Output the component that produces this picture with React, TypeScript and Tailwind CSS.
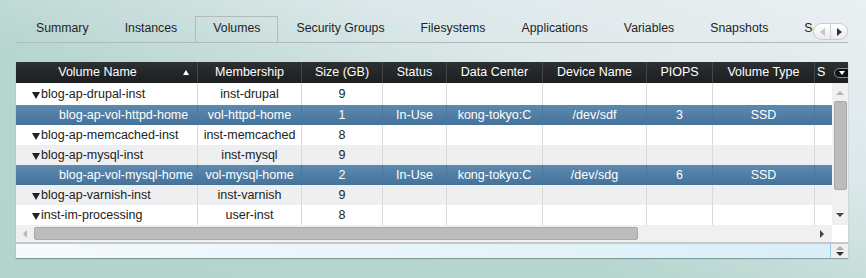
import React from 'react';

type Row = {
  name: string;
  child?: boolean;
  membership: string;
  size: string;
  status?: string;
  dataCenter?: string;
  device?: string;
  piops?: string;
  type?: string;
  tone: 'white' | 'gray' | 'sel';
  tall?: boolean;
};

const tabs = [
  'Summary',
  'Instances',
  'Volumes',
  'Security Groups',
  'Filesystems',
  'Applications',
  'Variables',
  'Snapshots',
  'Services',
];

const colWidths = [
  'w-[182px]',
  'w-[104px]',
  'w-[81px]',
  'w-[64px]',
  'w-[96px]',
  'w-[104px]',
  'w-[66px]',
  'w-[102px]',
  'w-[90px]',
];

const headers = [
  'Volume Name',
  'Membership',
  'Size (GB)',
  'Status',
  'Data Center',
  'Device Name',
  'PIOPS',
  'Volume Type',
  'State',
];

const rows: Row[] = [
  { name: 'blog-ap-drupal-inst', membership: 'inst-drupal', size: '9', tone: 'white', tall: true },
  {
    name: 'blog-ap-vol-httpd-home',
    child: true,
    membership: 'vol-httpd-home',
    size: '1',
    status: 'In-Use',
    dataCenter: 'kong-tokyo:C',
    device: '/dev/sdf',
    piops: '3',
    type: 'SSD',
    tone: 'sel',
  },
  { name: 'blog-ap-memcached-inst', membership: 'inst-memcached', size: '8', tone: 'white' },
  { name: 'blog-ap-mysql-inst', membership: 'inst-mysql', size: '9', tone: 'gray' },
  {
    name: 'blog-ap-vol-mysql-home',
    child: true,
    membership: 'vol-mysql-home',
    size: '2',
    status: 'In-Use',
    dataCenter: 'kong-tokyo:C',
    device: '/dev/sdg',
    piops: '6',
    type: 'SSD',
    tone: 'sel',
  },
  { name: 'blog-ap-varnish-inst', membership: 'inst-varnish', size: '9', tone: 'gray' },
  { name: 'inst-im-processing', membership: 'user-inst', size: '8', tone: 'white' },
];

const toneClass = {
  white: 'bg-white text-[#222]',
  gray: 'bg-[#eeeff1] text-[#222]',
  sel: 'bg-gradient-to-b from-[#5b8ab0] to-[#46729a] text-white',
};

function TabStrip() {
  return (
    <div className="mt-[16px] flex h-[27px] border-b border-[#b4b9bb] text-[12.3px]">
      <div className="ml-[2px] flex h-[26px] w-[795px] overflow-hidden">
        {tabs.map((t) => (
          <div
            key={t}
            className={
              t === 'Volumes'
                ? 'relative z-10 -mb-px flex h-[27px] shrink-0 items-center border-x border-t border-[#b4b9bb] border-b border-b-[#e0e9eb] px-[17px] pb-[2px] text-[#1f1f1f]'
                : 'flex h-[26px] shrink-0 items-center border-x border-transparent px-[17px] pb-[1px] text-[#1f1f1f]'
            }
          >
            {t}
          </div>
        ))}
      </div>
      <div className="mb-[2px] flex h-[17px] w-[35px] self-end overflow-hidden rounded-full border border-[#c9cccd] bg-gradient-to-b from-white to-[#e9ebec]">
        <div className="flex flex-1 items-center justify-center border-r border-[#cfd2d3]">
          <span className="h-0 w-0 border-y-[4px] border-r-[5px] border-y-transparent border-r-[#c2c4c5]" />
        </div>
        <div className="flex flex-1 items-center justify-center">
          <span className="h-0 w-0 border-y-[4px] border-l-[5px] border-y-transparent border-l-[#333]" />
        </div>
      </div>
    </div>
  );
}

function HeaderRow() {
  return (
    <div className="relative flex h-[21px] overflow-hidden bg-gradient-to-b from-[#2e3133] to-[#1b1d1e] text-white">
      {headers.map((h, i) =>
        i === 0 ? (
          <div key={h} className={`${colWidths[i]} flex shrink-0 items-center border-r border-[#44474a]`}>
            <span className="flex-1 text-center">{h}</span>
            <span className="ml-[4px] mr-[8px] h-0 w-0 border-x-[3px] border-b-[5px] border-x-transparent border-b-white" />
          </div>
        ) : (
          <div
            key={h}
            className={`${colWidths[i]} flex shrink-0 items-center justify-center border-r border-[#44474a]`}
          >
            {i === 8 ? <span className="ml-[2px] mr-auto">S</span> : h}
          </div>
        ),
      )}
      <div className="absolute right-[-4px] top-[6px] flex h-[10px] w-[18px] items-center justify-center rounded-full border border-[#8a8d8f] bg-[#111]">
        <span className="mr-[3px] h-0 w-0 border-x-[3px] border-t-[4px] border-x-transparent border-t-white" />
      </div>
    </div>
  );
}

function Cell({ w, sel, children, className = '' }: { w: string; sel: boolean; children?: React.ReactNode; className?: string }) {
  return (
    <div
      className={`${w} flex shrink-0 items-center border-r ${sel ? 'border-[#4c789e]' : 'border-[#d8d9db]'} ${className}`}
    >
      {children}
    </div>
  );
}

function BodyRow({ r }: { r: Row }) {
  const sel = r.tone === 'sel';
  const cells = [r.membership, r.size, r.status, r.dataCenter, r.device, r.piops, r.type, ''];
  return (
    <div className={`flex ${r.tall ? 'h-[22px]' : 'h-[20px]'} ${toneClass[r.tone]}`}>
      <Cell w={colWidths[0]} sel={sel} className={r.child ? 'pl-[43px]' : 'pl-[16px]'}>
        {!r.child && (
          <span className="mr-[1px] mt-[3px] h-0 w-0 border-x-[4px] border-t-[7px] border-x-transparent border-t-[#222]" />
        )}
        <span className="whitespace-nowrap">{r.name}</span>
      </Cell>
      {cells.map((c, i) => (
        <Cell key={i} w={colWidths[i + 1]} sel={sel} className="justify-center whitespace-nowrap">
          {c}
        </Cell>
      ))}
    </div>
  );
}

function VScroll() {
  return (
    <div className="flex w-[16px] flex-col items-center bg-[#f0f0f0] pt-[8px]">
      <span className="h-0 w-0 border-x-[4px] border-b-[4px] border-x-transparent border-b-[#b5b5b5]" />
      <div className="mt-[6px] h-[89px] w-[13px] rounded-[2px] border border-[#a9a9a9] bg-[#bcbcbc]" />
      <span className="mt-[23px] h-0 w-0 border-x-[4px] border-t-[4px] border-x-transparent border-t-[#444]" />
    </div>
  );
}

function HScroll() {
  return (
    <div className="flex h-[17px]">
      <div className="flex w-[816px] items-center bg-[#f0f0f0] pl-[7px]">
        <span className="h-0 w-0 border-y-[4px] border-r-[4px] border-y-transparent border-r-[#b8b8b8]" />
        <div className="ml-[7px] h-[13px] w-[604px] rounded-[2px] border border-[#a9a9a9] bg-[#bcbcbc]" />
        <span className="ml-[182px] h-0 w-0 border-y-[4px] border-l-[4px] border-y-transparent border-l-[#444]" />
      </div>
      <div className="w-[16px] bg-white" />
    </div>
  );
}

function Footer() {
  return (
    <div className="flex h-[16px] border-t-2 border-[#c6c9ca]">
      <div className="flex-1 border-r border-[#8fd0e6] bg-gradient-to-r from-[#f5fafd] to-[#d9eef7]" />
      <div className="flex w-[17px] flex-col items-center justify-center gap-[2px] bg-[#eeeeee]">
        <span className="h-0 w-0 border-x-[4px] border-b-[4px] border-x-transparent border-b-[#aaaaaa]" />
        <span className="h-0 w-0 border-x-[4px] border-t-[4px] border-x-transparent border-t-[#333]" />
      </div>
    </div>
  );
}

export default function App() {
  return (
    <div className="h-[278px] w-[866px] overflow-hidden bg-[linear-gradient(200deg,#eaeff2_0%,#dde8ea_30%,#b7d6d0_60%,#b3d3cd_100%)] pl-[16px] pr-[18px] font-['Liberation_Sans',Arial,sans-serif]">
      <TabStrip />
      <div className="mt-[19px] w-[832px] bg-white text-[12.5px] shadow-[0_1px_1px_rgba(60,90,90,0.45)]">
        <HeaderRow />
        <div className="flex">
          <div className="w-[816px] overflow-hidden">
            {rows.map((r) => (
              <BodyRow key={r.name} r={r} />
            ))}
          </div>
          <VScroll />
        </div>
        <HScroll />
        <Footer />
      </div>
    </div>
  );
}
